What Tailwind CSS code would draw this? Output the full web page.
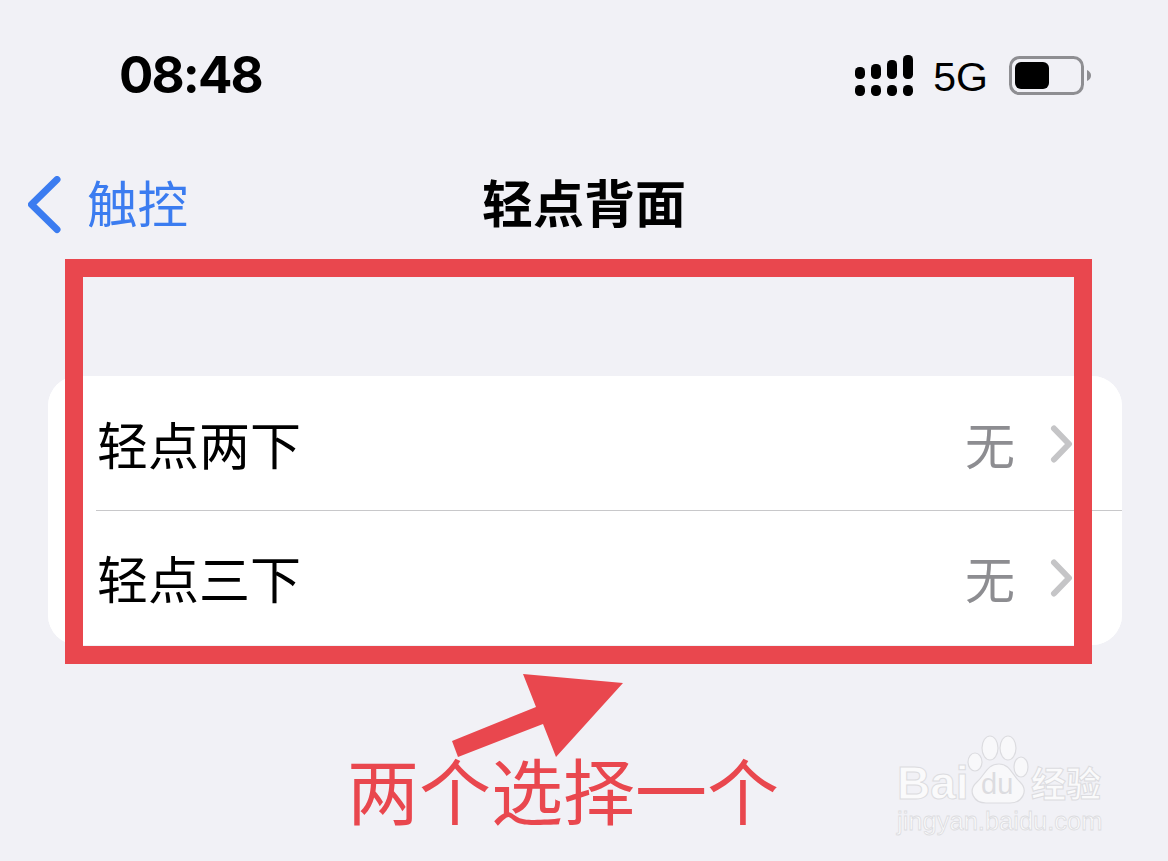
<!DOCTYPE html>
<html><head><meta charset="utf-8"><script src="https://cdn.jsdelivr.net/npm/@tailwindcss/browser@4"></script></head>
<body class="m-0">
<div class="relative w-[1168px] h-[861px] overflow-hidden bg-[#f1f1f6] text-black font-['Inter','Noto_Sans_CJK_SC',sans-serif]">
  <header class="h-[150px] flex items-start justify-between pl-[119px] pr-[77px] pt-[45px]">
    <span class="text-[51px] leading-[60px] font-bold tracking-[-1.9px] font-['Inter',sans-serif]">08:48</span>
    <div class="flex items-center pt-[9px]">
      <svg width="58" height="42" viewBox="0 0 58 42" fill="#000"><rect x="0" y="12" width="10" height="12" rx="4.500"/><rect x="16" y="9" width="10" height="15" rx="4.500"/><rect x="32" y="5" width="10" height="19" rx="4.500"/><rect x="48" y="0" width="10" height="24" rx="4.500"/><rect x="0" y="30" width="10" height="11" rx="4.500"/><rect x="16" y="30" width="10" height="11" rx="4.500"/><rect x="32" y="30" width="10" height="11" rx="4.500"/><rect x="48" y="30" width="10" height="11" rx="4.500"/></svg>
      <span class="ml-[20px] mt-[2px] text-[41px] leading-[42px] font-['Liberation_Sans',sans-serif]">5G</span>
      <svg class="ml-[21px]" width="82" height="40" viewBox="0 0 82 40"><rect x="1.500" y="1.500" width="72" height="36" rx="9" fill="none" stroke="#8e8e92" stroke-width="3"/><rect x="6" y="6" width="34" height="27" rx="6" fill="#000"/><path d="M78 14 Q82 16 82 19.500 Q82 23 78 25Z" fill="#8e8e92"/></svg>
    </div>
  </header>
  <nav class="relative h-[110px] flex items-start">
    <div class="flex items-center pl-[28px] pt-[26px] h-[84px]">
      <svg width="34" height="58" viewBox="0 0 34 58" fill="none"><path d="M29 3.500 L3.500 28.500 L29 53.500" stroke="#3b7cf0" stroke-width="7" stroke-linecap="round" stroke-linejoin="round"/></svg>
      <span class="ml-[25px] text-[50.500px] leading-[58px] text-[#3b7cf0]">触控</span>
    </div>
    <h1 class="absolute left-[482px] top-[26px] text-[51px] leading-[58px] font-bold">轻点背面</h1>
  </nav>
  <div class="pt-[116px] px-[48px]">
    <section class="w-[1074px] h-[269px] bg-[#fdfefe] rounded-[30px] overflow-hidden">
      <div class="relative h-[135px] bg-white flex items-center justify-between pl-[49px] pr-[49px]">
        <span class="text-[51px] leading-[58px] mt-[6px]">轻点两下</span>
        <span class="flex items-center gap-[35px] mt-[6px]"><span class="text-[50px] leading-[58px] text-[#8d8d91]">无</span>
          <svg class="-mt-[6px]" width="23" height="38" viewBox="0 0 23 38" fill="none"><path d="M4 3.500 L19 19 L4 34.500" stroke="#c5c5c7" stroke-width="6" stroke-linecap="round" stroke-linejoin="round"/></svg></span>
        <div class="absolute left-[48px] right-0 bottom-0 h-[1px] bg-[#c8c8ca]"></div>
      </div>
      <div class="h-[134px] bg-white flex items-center justify-between pl-[49px] pr-[49px]">
        <span class="text-[51px] leading-[58px] mt-[6px]">轻点三下</span>
        <span class="flex items-center gap-[35px] mt-[6px]"><span class="text-[50px] leading-[58px] text-[#8d8d91]">无</span>
          <svg class="-mt-[6px]" width="23" height="38" viewBox="0 0 23 38" fill="none"><path d="M4 3.500 L19 19 L4 34.500" stroke="#c5c5c7" stroke-width="6" stroke-linecap="round" stroke-linejoin="round"/></svg></span>
      </div>
    </section>
  </div>

  <div class="absolute left-[65px] top-[259px] w-[1027px] h-[405px] border-[18px] border-[#e9474e]"></div>
  <svg class="absolute left-[440px] top-[665px]" width="200" height="100" viewBox="0 0 200 100"><path d="M12 76 L96 42 L83 9 L183 18 L116 92 L103 59 L18 92Z" fill="#e9474e" /></svg>
  <div class="absolute left-[347px] top-[743px] text-[72px] leading-[100px] text-[#e9474e] whitespace-nowrap">两个选择一个</div>

  <div class="absolute left-[896px] top-[735px] w-[210px] h-[100px] text-[#fafafb]">
    <svg class="absolute left-0 top-0" width="135" height="70" viewBox="0 0 135 70" fill="#f8f8fa" stroke="#dcdce0" stroke-width="1.200">
      <ellipse cx="94" cy="13" rx="8" ry="12"/><ellipse cx="112" cy="13" rx="8" ry="12"/><ellipse cx="79" cy="27" rx="7" ry="9"/><ellipse cx="125" cy="32" rx="7" ry="10"/>
      <path d="M103 29 C114 29 116 40 124 47 C133 56 126 68 114 68 L90 68 C78 68 71 56 81 47 C89 40 91 29 103 29Z"/>
    </svg>
    <span class="absolute left-[1px] top-[23px] text-[46px] leading-[50px] font-bold font-['Liberation_Sans',sans-serif] [-webkit-text-stroke:1px_#dcdce0]">Bai</span>
    <span class="absolute left-[85px] top-[33px] text-[29px] leading-[32px] text-[#dcdce0] font-['Liberation_Sans',sans-serif]">du</span>
    <span class="absolute left-[135px] top-[27px] text-[35px] leading-[44px] font-bold [-webkit-text-stroke:1px_#dcdce0] whitespace-nowrap">经验</span>
    <span class="absolute left-[1px] top-[72px] text-[25.500px] leading-[28px] font-['Liberation_Sans',sans-serif] [-webkit-text-stroke:0.8px_#dcdce0] whitespace-nowrap">jingyan.baidu.com</span>
  </div>
</div>
</body></html>
